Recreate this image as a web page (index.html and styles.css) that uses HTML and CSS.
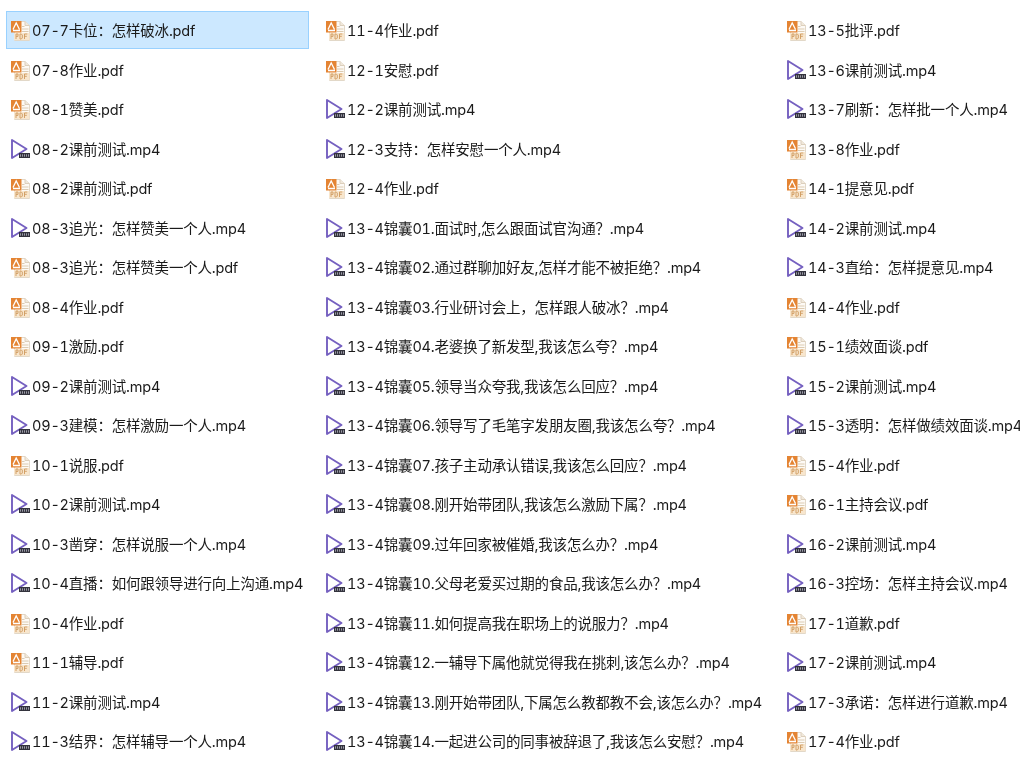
FILE: index.html
```html
<!DOCTYPE html>
<html lang="zh-CN">
<head>
<meta charset="utf-8">
<title>文件列表</title>
<link rel="stylesheet" href="styles.css">
</head>
<body>
<svg class="defs" width="0" height="0" aria-hidden="true">
  <defs>
    <symbol id="pdf" viewBox="0 0 20 22">
      <path d="M4.500 2.500H15l4.500 4V21.500H4.500z" fill="#fdfaf5" stroke="#e2d8c8"/>
      <path d="M15 2.500V6.500h4.500" fill="#f1e9dc" stroke="#dccfbc"/>
      <path d="M12 7.500h2.500M12 10h6.500M12 12.500h6.500" stroke="#dccbb2" fill="none"/>
      <rect x="1" y="2" width="10.500" height="11.500" fill="#e48433"/>
      <path d="M3 10.500 6.200 4 9.500 10.500M3 11.500h7" fill="none" stroke="#fff" stroke-width="1.300"/>
      <rect x="4" y="14" width="15.500" height="7" fill="#f8e6cd"/>
      <path d="M6 20v-5h2v2.400H6M10 15v5h1.300l1-1v-3l-1-1zM14.500 20v-5h2.800M14.500 17.300h2.300" fill="none" stroke="#cf9a5e" stroke-width=".9"/>
    </symbol>
    <symbol id="mp4" viewBox="0 0 20 22">
      <path d="M2 2 16.500 11 2 20z" fill="#fff" stroke="#7560c0" stroke-width="1.900" stroke-linejoin="round"/>
      <rect x="9" y="15" width="11" height="5" fill="#33333d"/>
      <path d="M10.500 16.300v2.400M12.500 16.300v2.400M14.500 16.300v2.400M16.500 16.300v2.400M18.500 16.300v2.400" stroke="#b8b8c4" stroke-width=".8"/>
    </symbol>
  </defs>
</svg>
<main class="files">
  <div class="file selected"><svg class="ico"><use href="#pdf"/></svg><span class="name">07-7卡位：怎样破冰.pdf</span></div>
  <div class="file"><svg class="ico"><use href="#pdf"/></svg><span class="name">07-8作业.pdf</span></div>
  <div class="file"><svg class="ico"><use href="#pdf"/></svg><span class="name">08-1赞美.pdf</span></div>
  <div class="file"><svg class="ico"><use href="#mp4"/></svg><span class="name">08-2课前测试.mp4</span></div>
  <div class="file"><svg class="ico"><use href="#pdf"/></svg><span class="name">08-2课前测试.pdf</span></div>
  <div class="file"><svg class="ico"><use href="#mp4"/></svg><span class="name">08-3追光：怎样赞美一个人.mp4</span></div>
  <div class="file"><svg class="ico"><use href="#pdf"/></svg><span class="name">08-3追光：怎样赞美一个人.pdf</span></div>
  <div class="file"><svg class="ico"><use href="#pdf"/></svg><span class="name">08-4作业.pdf</span></div>
  <div class="file"><svg class="ico"><use href="#pdf"/></svg><span class="name">09-1激励.pdf</span></div>
  <div class="file"><svg class="ico"><use href="#mp4"/></svg><span class="name">09-2课前测试.mp4</span></div>
  <div class="file"><svg class="ico"><use href="#mp4"/></svg><span class="name">09-3建模：怎样激励一个人.mp4</span></div>
  <div class="file"><svg class="ico"><use href="#pdf"/></svg><span class="name">10-1说服.pdf</span></div>
  <div class="file"><svg class="ico"><use href="#mp4"/></svg><span class="name">10-2课前测试.mp4</span></div>
  <div class="file"><svg class="ico"><use href="#mp4"/></svg><span class="name">10-3凿穿：怎样说服一个人.mp4</span></div>
  <div class="file"><svg class="ico"><use href="#mp4"/></svg><span class="name">10-4直播：如何跟领导进行向上沟通.mp4</span></div>
  <div class="file"><svg class="ico"><use href="#pdf"/></svg><span class="name">10-4作业.pdf</span></div>
  <div class="file"><svg class="ico"><use href="#pdf"/></svg><span class="name">11-1辅导.pdf</span></div>
  <div class="file"><svg class="ico"><use href="#mp4"/></svg><span class="name">11-2课前测试.mp4</span></div>
  <div class="file"><svg class="ico"><use href="#mp4"/></svg><span class="name">11-3结界：怎样辅导一个人.mp4</span></div>

  <div class="file"><svg class="ico"><use href="#pdf"/></svg><span class="name">11-4作业.pdf</span></div>
  <div class="file"><svg class="ico"><use href="#pdf"/></svg><span class="name">12-1安慰.pdf</span></div>
  <div class="file"><svg class="ico"><use href="#mp4"/></svg><span class="name">12-2课前测试.mp4</span></div>
  <div class="file"><svg class="ico"><use href="#mp4"/></svg><span class="name">12-3支持：怎样安慰一个人.mp4</span></div>
  <div class="file"><svg class="ico"><use href="#pdf"/></svg><span class="name">12-4作业.pdf</span></div>
  <div class="file"><svg class="ico"><use href="#mp4"/></svg><span class="name">13-4锦囊01.面试时,怎么跟面试官沟通？.mp4</span></div>
  <div class="file"><svg class="ico"><use href="#mp4"/></svg><span class="name">13-4锦囊02.通过群聊加好友,怎样才能不被拒绝？.mp4</span></div>
  <div class="file"><svg class="ico"><use href="#mp4"/></svg><span class="name">13-4锦囊03.行业研讨会上，怎样跟人破冰？.mp4</span></div>
  <div class="file"><svg class="ico"><use href="#mp4"/></svg><span class="name">13-4锦囊04.老婆换了新发型,我该怎么夸？.mp4</span></div>
  <div class="file"><svg class="ico"><use href="#mp4"/></svg><span class="name">13-4锦囊05.领导当众夸我,我该怎么回应？.mp4</span></div>
  <div class="file"><svg class="ico"><use href="#mp4"/></svg><span class="name">13-4锦囊06.领导写了毛笔字发朋友圈,我该怎么夸？.mp4</span></div>
  <div class="file"><svg class="ico"><use href="#mp4"/></svg><span class="name">13-4锦囊07.孩子主动承认错误,我该怎么回应？.mp4</span></div>
  <div class="file"><svg class="ico"><use href="#mp4"/></svg><span class="name">13-4锦囊08.刚开始带团队,我该怎么激励下属？.mp4</span></div>
  <div class="file"><svg class="ico"><use href="#mp4"/></svg><span class="name">13-4锦囊09.过年回家被催婚,我该怎么办？.mp4</span></div>
  <div class="file"><svg class="ico"><use href="#mp4"/></svg><span class="name">13-4锦囊10.父母老爱买过期的食品,我该怎么办？.mp4</span></div>
  <div class="file"><svg class="ico"><use href="#mp4"/></svg><span class="name">13-4锦囊11.如何提高我在职场上的说服力？.mp4</span></div>
  <div class="file"><svg class="ico"><use href="#mp4"/></svg><span class="name">13-4锦囊12.一辅导下属他就觉得我在挑刺,该怎么办？.mp4</span></div>
  <div class="file"><svg class="ico"><use href="#mp4"/></svg><span class="name">13-4锦囊13.刚开始带团队,下属怎么教都教不会,该怎么办？.mp4</span></div>
  <div class="file"><svg class="ico"><use href="#mp4"/></svg><span class="name">13-4锦囊14.一起进公司的同事被辞退了,我该怎么安慰？.mp4</span></div>

  <div class="file"><svg class="ico"><use href="#pdf"/></svg><span class="name">13-5批评.pdf</span></div>
  <div class="file"><svg class="ico"><use href="#mp4"/></svg><span class="name">13-6课前测试.mp4</span></div>
  <div class="file"><svg class="ico"><use href="#mp4"/></svg><span class="name">13-7刷新：怎样批一个人.mp4</span></div>
  <div class="file"><svg class="ico"><use href="#pdf"/></svg><span class="name">13-8作业.pdf</span></div>
  <div class="file"><svg class="ico"><use href="#pdf"/></svg><span class="name">14-1提意见.pdf</span></div>
  <div class="file"><svg class="ico"><use href="#mp4"/></svg><span class="name">14-2课前测试.mp4</span></div>
  <div class="file"><svg class="ico"><use href="#mp4"/></svg><span class="name">14-3直给：怎样提意见.mp4</span></div>
  <div class="file"><svg class="ico"><use href="#pdf"/></svg><span class="name">14-4作业.pdf</span></div>
  <div class="file"><svg class="ico"><use href="#pdf"/></svg><span class="name">15-1绩效面谈.pdf</span></div>
  <div class="file"><svg class="ico"><use href="#mp4"/></svg><span class="name">15-2课前测试.mp4</span></div>
  <div class="file"><svg class="ico"><use href="#mp4"/></svg><span class="name">15-3透明：怎样做绩效面谈.mp4</span></div>
  <div class="file"><svg class="ico"><use href="#pdf"/></svg><span class="name">15-4作业.pdf</span></div>
  <div class="file"><svg class="ico"><use href="#pdf"/></svg><span class="name">16-1主持会议.pdf</span></div>
  <div class="file"><svg class="ico"><use href="#mp4"/></svg><span class="name">16-2课前测试.mp4</span></div>
  <div class="file"><svg class="ico"><use href="#mp4"/></svg><span class="name">16-3控场：怎样主持会议.mp4</span></div>
  <div class="file"><svg class="ico"><use href="#pdf"/></svg><span class="name">17-1道歉.pdf</span></div>
  <div class="file"><svg class="ico"><use href="#mp4"/></svg><span class="name">17-2课前测试.mp4</span></div>
  <div class="file"><svg class="ico"><use href="#mp4"/></svg><span class="name">17-3承诺：怎样进行道歉.mp4</span></div>
  <div class="file"><svg class="ico"><use href="#pdf"/></svg><span class="name">17-4作业.pdf</span></div>
</main>
</body>
</html>
```
FILE: styles.css
```css
html, body {
  margin: 0;
  background: #fff;
  overflow: hidden;
}
.defs {
  display: block;
  height: 0;
}
.files {
  display: grid;
  grid-auto-flow: column;
  grid-template-rows: repeat(19, 39.5px);
  grid-template-columns: 303px 449px 240px;
  column-gap: 12px;
  justify-content: start;
  padding: 11px 0 0 6px;
  font-family: "Inter", "Noto Sans CJK SC", sans-serif;
  font-size: 14.5px;
  font-variant-numeric: tabular-nums;
  letter-spacing: -0.2px;
  color: #1a1a1a;
  will-change: transform;
}
.file {
  display: flex;
  align-items: center;
  gap: 2px;
  height: 38px;
  padding-left: 4px;
  box-sizing: border-box;
  white-space: nowrap;
}
.name {
  padding-bottom: 1px;
}
.selected {
  background: #cce8ff;
  border: 1px solid #99d1ff;
  padding-left: 3px;
}
.ico {
  width: 20px;
  height: 22px;
  flex: none;
}
```
